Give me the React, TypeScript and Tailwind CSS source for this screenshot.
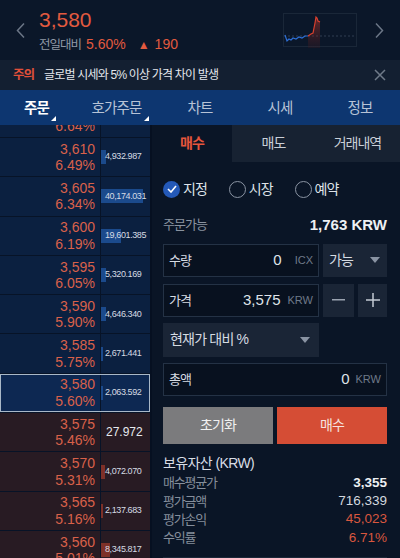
import React from 'react';

const font = { fontFamily: '"Liberation Sans", "Noto Sans CJK KR", sans-serif' };

type Row = { price: string; pct: string; vol: string; bar: number; side: 'ask' | 'bid'; current?: boolean; big?: boolean };

const rows: Row[] = [
  { price: '3,615', pct: '6.64%', vol: '', bar: 0, side: 'ask' },
  { price: '3,610', pct: '6.49%', vol: '4,932.987', bar: 5, side: 'ask' },
  { price: '3,605', pct: '6.34%', vol: '40,174.031', bar: 42, side: 'ask' },
  { price: '3,600', pct: '6.19%', vol: '19,601.385', bar: 20, side: 'ask' },
  { price: '3,595', pct: '6.05%', vol: '5,320.169', bar: 5, side: 'ask' },
  { price: '3,590', pct: '5.90%', vol: '4,646.340', bar: 5, side: 'ask' },
  { price: '3,585', pct: '5.75%', vol: '2,671.441', bar: 2, side: 'ask' },
  { price: '3,580', pct: '5.60%', vol: '2,063.592', bar: 2, side: 'ask', current: true },
  { price: '3,575', pct: '5.46%', vol: '27.972', bar: 0, side: 'bid', big: true },
  { price: '3,570', pct: '5.31%', vol: '4,072.070', bar: 4, side: 'bid' },
  { price: '3,565', pct: '5.16%', vol: '2,137.683', bar: 2, side: 'bid' },
  { price: '3,560', pct: '5.01%', vol: '8,345.817', bar: 9, side: 'bid' },
];

function Chevron({ dir }: { dir: 'left' | 'right' }) {
  return (
    <svg width="9" height="15" viewBox="0 0 9 15" fill="none" stroke="#6b7686" strokeWidth="1.5">
      {dir === 'left' ? <path d="M8 0.5 L1.5 7.5 L8 14.5" /> : <path d="M1 0.5 L7.5 7.5 L1 14.5" />}
    </svg>
  );
}

function MiniChart() {
  return (
    <div className="w-[74px] h-[34px] border border-[#1a2738] relative">
      <svg width="74" height="34" viewBox="0 0 74 34" className="absolute left-0 top-0">
        <defs>
          <linearGradient id="rg" x1="0" y1="0" x2="0" y2="1">
            <stop offset="0" stopColor="#c0392b" stopOpacity="0.9" />
            <stop offset="1" stopColor="#5a1a1a" stopOpacity="0.3" />
          </linearGradient>
        </defs>
        <line x1="0" y1="22" x2="72" y2="22" stroke="#3a4a5e" strokeWidth="0.8" strokeDasharray="2 2" />
        <path d="M24 22 L27 20 L29 19 L30 14 L31 9 L32 3 L33 4 L34 7 L36 8 L36 34 L24 34 Z" fill="url(#rg)" opacity="0.6" />
        <path d="M24 22 L27 20 L29 19 L30 14 L31 9 L32 3 L33 4 L34 7 L36 8" fill="none" stroke="#d9402f" strokeWidth="1.2" />
        <path d="M1 21 L3 27 L5 25 L7 26 L9 24 L12 25 L15 23 L18 24 L21 22 L24 22" fill="none" stroke="#2e6fd6" strokeWidth="1.2" />
      </svg>
    </div>
  );
}

function Corner() {
  return (
    <svg width="5" height="5" viewBox="0 0 5 5" className="block">
      <path d="M5 0 L5 5 L0 5 Z" fill="#ffffff" />
    </svg>
  );
}

function Caret() {
  return (
    <svg width="10" height="6" viewBox="0 0 10 6">
      <path d="M0 0 L10 0 L5 6 Z" fill="#8a94a3" />
    </svg>
  );
}

function BookRow({ r }: { r: Row }) {
  const bg = r.side === 'ask' ? (r.current ? 'bg-[#0d2852]' : 'bg-[#0b2040]') : 'bg-[#281b23]';
  const barColor = r.side === 'ask' ? 'bg-[#1b4a8c]' : 'bg-[#7d3028]';
  return (
    <div className={`relative flex h-[39.3px] border-t border-[#071327] ${bg}`}>
      <div className="w-[101px] flex flex-col items-end justify-center pr-[5px] border-r border-[#071327]">
        <div className="text-[14px] leading-[16.5px] text-[#d9614a]">{r.price}</div>
        <div className="text-[14px] leading-[16.5px] text-[#d9614a]">{r.pct}</div>
      </div>
      <div className="flex-1 relative flex items-center">
        {r.bar > 0 && <div className={`absolute left-0 h-[14px] ${barColor}`} style={{ width: r.bar }} />}
        {r.vol && (
          <span
            className={`relative whitespace-nowrap ${
              r.big ? 'text-[12px] text-[#e6e9ee] pl-[5px]' : 'text-[9px] tracking-[-0.4px] text-[#d6dbe3] pl-[4px]'
            }`}
          >
            {r.vol}
          </span>
        )}
      </div>
      {r.current && <div className="absolute inset-0 border border-[#a9b8c8]" />}
    </div>
  );
}

export default function App() {
  return (
    <div className="w-[400px] h-[558px] overflow-hidden bg-[#0a1526] text-white" style={font}>
      {/* Header */}
      <div className="h-[60px] bg-[#0b1729] flex items-center pl-[16px] pr-[16px]">
        <Chevron dir="left" />
        <div className="ml-[14px] flex-1 flex flex-col pt-[2px]">
          <div className="text-[21px] leading-[26px] text-[#e25a3f]">3,580</div>
          <div className="flex items-baseline mt-[1px]">
            <span className="text-[12.5px] tracking-[-1px] text-[#9099a6]">전일대비</span>
            <span className="text-[14px] text-[#e25a3f] ml-[5px]">5.60%</span>
            <span className="text-[12px] text-[#e25a3f] ml-[12px]">▲</span>
            <span className="text-[14px] text-[#e25a3f] ml-[5px]">190</span>
          </div>
        </div>
        <MiniChart />
        <div className="ml-[18px]">
          <Chevron dir="right" />
        </div>
      </div>

      {/* Warning */}
      <div className="h-[30px] bg-[#131f31] flex items-center pl-[13px] pr-[14px]">
        <span className="text-[12.5px] tracking-[-1px] text-[#e0503a] font-bold">주의</span>
        <span className="text-[12px] tracking-[-0.8px] text-[#e4e7ec] ml-[10px] flex-1">글로벌 시세와 5% 이상 가격 차이 발생</span>
        <svg width="12" height="12" viewBox="0 0 12 12" stroke="#6f7a89" strokeWidth="1.5">
          <path d="M1 1 L11 11 M11 1 L1 11" />
        </svg>
      </div>

      {/* Main tabs */}
      <div className="h-[35px] bg-[#0d3670] grid grid-cols-5 items-center text-center text-[14.5px] tracking-[-0.8px] leading-[20px]">
        <div className="flex justify-center items-end">
          <span className="text-white font-bold">주문</span>
          <span className="ml-[2px] mb-[-3px]"><Corner /></span>
        </div>
        <div className="flex justify-center items-end">
          <span className="text-[#b7c3d6]">호가주문</span>
          <span className="ml-[2px] mb-[-3px]"><Corner /></span>
        </div>
        <div className="text-[#b7c3d6]">차트</div>
        <div className="text-[#b7c3d6]">시세</div>
        <div className="text-[#b7c3d6]">정보</div>
      </div>

      <div className="flex h-[433px]">
        {/* Order book */}
        <div className="w-[150px] overflow-hidden bg-[#0b2040]">
          <div className="mt-[-27.3px]">
            {rows.map((r) => (
              <BookRow key={r.price} r={r} />
            ))}
          </div>
        </div>
        <div className="w-[2px] bg-[#061021]" />

        {/* Order panel */}
        <div className="flex-1 bg-[#0a1526] flex flex-col">
          <div className="h-[37px] grid grid-cols-[80px_83px_1fr] text-[14px] tracking-[-1px]">
            <div className="flex items-center justify-center text-[#e6553c] font-bold">매수</div>
            <div className="flex items-center justify-center bg-[#172232] text-[#c9cfd8]">매도</div>
            <div className="flex items-center justify-center bg-[#172232] text-[#c9cfd8]">거래내역</div>
          </div>

          <div className="pl-[11px] pr-[13px] flex flex-col">
            {/* Radios */}
            <div className="h-[17px] mt-[19px] flex items-center text-[14px] tracking-[-1px] text-[#dfe3e9]">
              <span className="w-[17px] h-[17px] rounded-full bg-[#2459b8] flex items-center justify-center">
                <svg width="10" height="8" viewBox="0 0 10 8" fill="none" stroke="#fff" strokeWidth="1.6">
                  <path d="M1 4 L4 7 L9 1" />
                </svg>
              </span>
              <span className="ml-[3px]">지정</span>
              <span className="ml-[22px] w-[17px] h-[17px] rounded-full border border-[#8a94a3]" />
              <span className="ml-[3px]">시장</span>
              <span className="ml-[22px] w-[17px] h-[17px] rounded-full border border-[#8a94a3]" />
              <span className="ml-[3px]">예약</span>
            </div>

            {/* Available */}
            <div className="mt-[17px] h-[20px] flex items-center justify-between">
              <span className="text-[13px] tracking-[-1px] text-[#8a93a0]">주문가능</span>
              <span className="text-[15px] font-bold text-[#eef0f3]">1,763 KRW</span>
            </div>

            {/* Qty */}
            <div className="mt-[9px] flex gap-[4px]">
              <div className="w-[156px] h-[33px] border border-[#243245] bg-[#08111f] flex items-center px-[5px]">
                <span className="text-[13px] tracking-[-1px] text-[#d6dbe2] flex-1">수량</span>
                <span className="text-[15px] text-[#dfe3e9]">0</span>
                <span className="text-[11px] text-[#6f7a89] ml-[13px]">ICX</span>
              </div>
              <div className="flex-1 h-[33px] bg-[#1a2536] flex items-center justify-between pl-[6px] pr-[7px]">
                <span className="text-[14px] tracking-[-1px] text-[#d6dbe2]">가능</span>
                <Caret />
              </div>
            </div>

            {/* Price */}
            <div className="mt-[7px] flex gap-[4px]">
              <div className="w-[156px] h-[33px] border border-[#243245] bg-[#08111f] flex items-center px-[5px]">
                <span className="text-[13px] tracking-[-1px] text-[#d6dbe2] flex-1">가격</span>
                <span className="text-[15px] text-[#dfe3e9]">3,575</span>
                <span className="text-[11px] text-[#6f7a89] ml-[7px]">KRW</span>
              </div>
              <div className="w-[31px] h-[33px] bg-[#1a2536] flex items-center justify-center">
                <svg width="13" height="2" viewBox="0 0 13 2"><rect width="13" height="1.5" fill="#9aa3b0" /></svg>
              </div>
              <div className="flex-1 h-[33px] bg-[#1a2536] flex items-center justify-center">
                <svg width="14" height="14" viewBox="0 0 14 14" stroke="#c4cad3" strokeWidth="1.5">
                  <path d="M7 0 V14 M0 7 H14" />
                </svg>
              </div>
            </div>

            {/* Compare */}
            <div className="mt-[6px] w-[156px] h-[34px] bg-[#1a2536] flex items-center justify-between pl-[7px] pr-[9px]">
              <span className="text-[14px] tracking-[-0.8px] text-[#d6dbe2]">현재가 대비 %</span>
              <Caret />
            </div>

            {/* Total */}
            <div className="mt-[6px] h-[33px] border border-[#243245] bg-[#08111f] flex items-center px-[5px]">
              <span className="text-[13px] tracking-[-1px] text-[#d6dbe2] flex-1">총액</span>
              <span className="text-[15px] text-[#dfe3e9]">0</span>
              <span className="text-[11px] text-[#6f7a89] ml-[6px]">KRW</span>
            </div>

            {/* Buttons */}
            <div className="mt-[11px] flex gap-[4px]">
              <button className="flex-1 h-[37px] bg-[#7b7b7d] text-[14px] tracking-[-0.8px] text-[#f0f0f0]">초기화</button>
              <button className="flex-1 h-[37px] bg-[#d54d35] text-[14px] tracking-[-0.8px] text-[#f6e3df]">매수</button>
            </div>

            {/* Holdings */}
            <div className="mt-[8px] text-[14px] tracking-[-0.6px] leading-[22px] text-[#d8dde5]">보유자산 (KRW)</div>
            <div className="flex flex-col">
              <div className="h-[18.3px] flex items-center justify-between">
                <span className="text-[13px] tracking-[-1.2px] text-[#858e9b]">매수평균가</span>
                <span className="text-[13.5px] font-bold text-[#eef0f3]">3,355</span>
              </div>
              <div className="h-[18.3px] flex items-center justify-between">
                <span className="text-[13px] tracking-[-1.2px] text-[#858e9b]">평가금액</span>
                <span className="text-[13.5px] text-[#d3d8df]">716,339</span>
              </div>
              <div className="h-[18.3px] flex items-center justify-between">
                <span className="text-[13px] tracking-[-1.2px] text-[#858e9b]">평가손익</span>
                <span className="text-[13.5px] text-[#d9573f]">45,023</span>
              </div>
              <div className="h-[18.3px] flex items-center justify-between">
                <span className="text-[13px] tracking-[-1.2px] text-[#858e9b]">수익률</span>
                <span className="text-[13.5px] text-[#d9573f]">6.71%</span>
              </div>
            </div>
            <div className="mt-[10px] border-t border-[#1c2839]" />
          </div>
        </div>
      </div>
    </div>
  );
}
